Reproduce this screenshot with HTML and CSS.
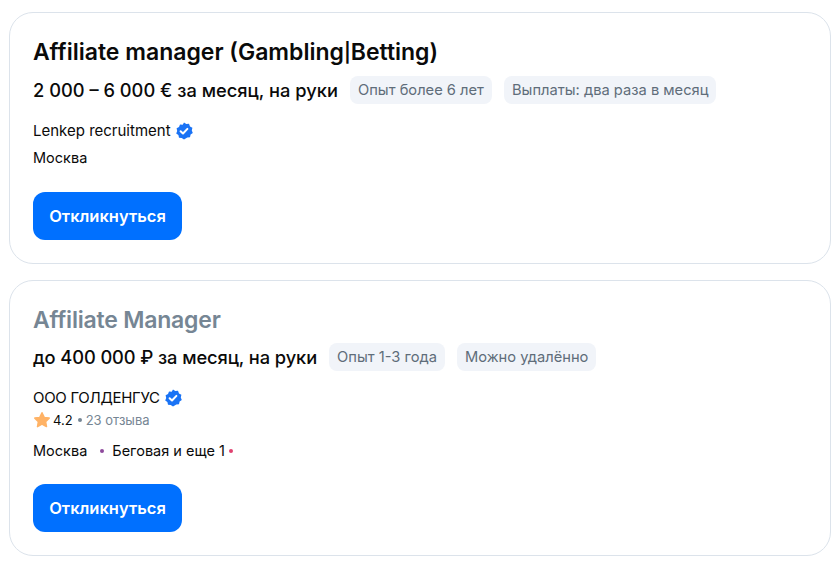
FILE: index.html
```html
<!DOCTYPE html>
<html lang="ru">

<head>
    <meta charset="UTF-8">
    <title>Вакансии</title>
    <link rel="stylesheet" href="styles.css">
</head>

<body>
    <div class="card">
        <h2 class="title">Affiliate manager (Gambling<span class="pipe">|</span>Betting)</h2>
        <div class="salary-row">
            <span class="salary">2 000 – 6 000 € за месяц, на руки</span>
            <span class="chip">Опыт более 6 лет</span>
            <span class="chip">Выплаты: два раза в месяц</span>
        </div>
        <div class="company">
            Lenkep recruitment
            <svg class="verified" viewBox="0 0 18 18"><path fill="#1a73f5" d="M9 0.6l2.3 1.5 2.7-.3 1 2.6 2.4 1.3-.6 2.7 1 2.5-2.2 1.6-.6 2.7-2.7.2L9 17.4l-2.3-1.4-2.7-.2-.6-2.7-2.2-1.6 1-2.5-.6-2.7 2.4-1.3 1-2.6 2.7.3z"/><path fill="none" stroke="#fff" stroke-width="2" stroke-linecap="round" stroke-linejoin="round" d="M5.6 9.2l2.4 2.3 4.4-4.6"/></svg>
        </div>
        <div class="place">Москва</div>
        <button type="button" class="apply">Откликнуться</button>
    </div>

    <div class="card">
        <h2 class="title visited">Affiliate Manager</h2>
        <div class="salary-row">
            <span class="salary tight">до 400 000 ₽ за месяц, на руки</span>
            <span class="chip">Опыт 1-3 года</span>
            <span class="chip">Можно удалённо</span>
        </div>
        <div class="company">
            <span class="caps">ООО ГОЛДЕНГУС</span>
            <svg class="verified" viewBox="0 0 18 18"><path fill="#1a73f5" d="M9 0.6l2.3 1.5 2.7-.3 1 2.6 2.4 1.3-.6 2.7 1 2.5-2.2 1.6-.6 2.7-2.7.2L9 17.4l-2.3-1.4-2.7-.2-.6-2.7-2.2-1.6 1-2.5-.6-2.7 2.4-1.3 1-2.6 2.7.3z"/><path fill="none" stroke="#fff" stroke-width="2" stroke-linecap="round" stroke-linejoin="round" d="M5.6 9.2l2.4 2.3 4.4-4.6"/></svg>
        </div>
        <div class="rating">
            <svg class="star" viewBox="0 0 18 18"><path fill="#ffb366" stroke="#ffb366" stroke-width="1.5" stroke-linejoin="round" d="M9 1.8l2.2 4.6 5 .7-3.6 3.5.9 5L9 13.2l-4.5 2.4.9-5L1.8 7.1l5-.7z"/></svg>
            <span class="score">4.2</span>
            <span class="dot grey"></span>
            <span class="reviews">23 отзыва</span>
        </div>
        <div class="place metro">
            Москва
            <span class="dot purple"></span>
            Беговая и еще 1
            <span class="dot pink"></span>
        </div>
        <button type="button" class="apply">Откликнуться</button>
    </div>
</body>

</html>
```

FILE: styles.css
```css
body {
    margin: 0;
    padding: 12px 8px 10px 9px;
    background-color: #fff;
    color: #0a0a0a;
    font-family: Inter, "Noto Sans", sans-serif;
}

.card {
    border: 1px solid #dce3eb;
    border-radius: 24px;
    padding: 24px 23px 23px;
    margin-bottom: 16px;
}

.title {
    margin: 0;
    font-size: 23px;
    line-height: 30px;
    font-weight: 600;
}

.pipe {
    font-size: 19px;
    vertical-align: 1px;
}

.visited {
    color: #768694;
    letter-spacing: -0.2px;
}

.salary-row {
    display: flex;
    align-items: center;
    gap: 12px;
    margin-top: 8px;
}

.salary {
    font-size: 18.3px;
    line-height: 28px;
    font-weight: 450;
}

.tight {
    letter-spacing: -0.1px;
}

.chip {
    background-color: #f1f4f9;
    color: #5f6d7a;
    font-size: 14.7px;
    line-height: 20px;
    padding: 4px 8px;
    border-radius: 8px;
}

.company {
    display: flex;
    align-items: center;
    gap: 4px;
    margin-top: 17px;
    font-size: 15px;
    line-height: 20px;
}

.caps {
    letter-spacing: -0.3px;
}

.verified {
    width: 18px;
    height: 18px;
}

.place {
    display: flex;
    align-items: center;
    margin-top: 7px;
    font-size: 14.5px;
    line-height: 20px;
}

.rating {
    display: flex;
    align-items: center;
    font-size: 13px;
    line-height: 18px;
    margin-top: 3px;
}

.star {
    width: 18px;
    height: 18px;
    margin-right: 2px;
}

.reviews {
    color: #768694;
}

.dot {
    width: 4px;
    height: 4px;
    border-radius: 50%;
}

.grey {
    background-color: #768694;
    margin: 0 4px 0 5px;
}

.purple {
    background-color: #8e4a9c;
    margin: 0 8px 0 13px;
}

.pink {
    background-color: #e0416f;
    margin-left: 4px;
}

.metro {
    margin-top: 13px;
    line-height: 18px;
}

.apply {
    display: block;
    margin-top: 24px;
    width: 149px;
    height: 48px;
    padding: 0;
    border: none;
    border-radius: 12px;
    background-color: #0070ff;
    color: #fff;
    font-family: inherit;
    font-size: 16.5px;
    font-weight: 600;
    cursor: pointer;
}
```
